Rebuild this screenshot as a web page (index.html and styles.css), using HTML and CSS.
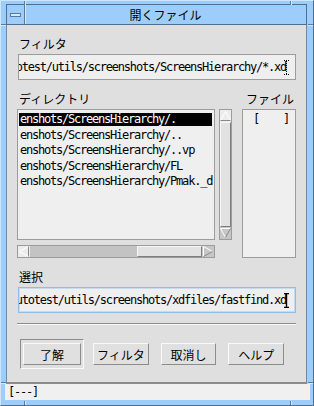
FILE: index.html
```html
<!DOCTYPE html>
<html lang="ja">
<head>
    <meta charset="UTF-8">
    <title>開くファイル</title>
    <link rel="stylesheet" href="styles.css">
</head>
<body>
    <div class="window">
        <!-- resize handle ticks on the frame -->
        <span class="tick tick-v" style="left:23px; top:0"></span>
        <span class="tick tick-v" style="left:289px; top:0"></span>
        <span class="tick tick-v" style="left:23px; bottom:0"></span>
        <span class="tick tick-v" style="left:289px; bottom:0"></span>
        <span class="tick tick-h" style="top:23px; left:0"></span>
        <span class="tick tick-h" style="top:23px; right:0"></span>
        <span class="tick tick-h" style="top:381px; left:0"></span>
        <span class="tick tick-h" style="top:381px; right:0"></span>

        <div class="titlebar">
            <div class="menu-btn"><span class="menu-bar"></span></div>
            <div class="title">開くファイル</div>
        </div>

        <div class="dialog">
            <div class="label">フィルタ</div>
            <div class="field">
                <span class="field-text">/home/user/autotest/utils/screenshots/ScreensHierarchy/*.xd</span>
                <svg class="ibeam" width="5" height="15" viewBox="0 0 5 15">
                    <path d="M0 0.5H5M0 14.5H5M2.5 1V14" stroke="#000" stroke-dasharray="1 1" fill="none"/>
                </svg>
            </div>

            <div class="lists-head">
                <div class="label dir-label">ディレクトリ</div>
                <div class="label file-label">ファイル</div>
            </div>

            <div class="lists">
                <div class="dir-col">
                    <div class="list dir-list">
                        <div class="item selected">enshots/ScreensHierarchy/.</div>
                        <div class="item">enshots/ScreensHierarchy/..</div>
                        <div class="item">enshots/ScreensHierarchy/..vp</div>
                        <div class="item">enshots/ScreensHierarchy/FL</div>
                        <div class="item">enshots/ScreensHierarchy/Pmak._d</div>
                    </div>
                    <div class="hscroll">
                        <div class="arrow arrow-light">
                            <svg width="12" height="11" viewBox="0 0 12 11">
                                <path d="M10.5 0.5L1.5 5.5L10.5 10.5" stroke="#fff" fill="none"/>
                                <path d="M10.5 0.5V10.5" stroke="#8a8a8a" fill="none"/>
                            </svg>
                        </div>
                        <div class="trough">
                            <div class="thumb thumb-h"></div>
                        </div>
                        <div class="arrow">
                            <svg width="12" height="11" viewBox="0 0 12 11">
                                <path d="M1.5 10.5V0.5L10.5 5.5" stroke="#fff" fill="none"/>
                                <path d="M10.5 5.5L1.5 10.5" stroke="#8a8a8a" fill="none"/>
                            </svg>
                        </div>
                    </div>
                </div>

                <div class="vscroll">
                    <div class="arrow arrow-light">
                        <svg width="11" height="12" viewBox="0 0 11 12">
                            <path d="M0.5 10.5L5.5 1.5L10.5 10.5" stroke="#fff" fill="none"/>
                            <path d="M0.5 10.5H10.5" stroke="#8a8a8a" fill="none"/>
                        </svg>
                    </div>
                    <div class="trough">
                        <div class="thumb thumb-v"></div>
                    </div>
                    <div class="arrow">
                        <svg width="11" height="12" viewBox="0 0 11 12">
                            <path d="M10.5 1.5H0.5L5.5 10.5" stroke="#fff" fill="none"/>
                            <path d="M5.5 10.5L10.5 1.5" stroke="#8a8a8a" fill="none"/>
                        </svg>
                    </div>
                </div>

                <div class="list file-list">
                    <div class="item file-item">[    ]</div>
                </div>
            </div>

            <div class="label sel-label">選択</div>
            <div class="field field-focus">
                <span class="field-text">/home/user/autotest/utils/screenshots/xdfiles/fastfind.xd</span>
                <svg class="ibeam" width="5" height="15" viewBox="0 0 5 15">
                    <path d="M0 0.5H5M0 14.5H5M2.5 1V14" stroke="#000" stroke-width="1.4" fill="none"/>
                </svg>
            </div>

            <div class="separator"></div>

            <div class="buttons">
                <div class="default-frame">
                    <button class="btn">了解</button>
                </div>
                <button class="btn">フィルタ</button>
                <button class="btn">取消し</button>
                <button class="btn">ヘルプ</button>
            </div>
        </div>

        <div class="status">[---]</div>
    </div>
</body>
</html>
```

FILE: styles.css
```css
body{
    margin: 0;
    font-family: "DejaVu Sans Mono", "Noto Sans CJK JP", monospace;
    font-size: 12px;
    color: #000;
}

.window{
    position: relative;
    width: 314px;
    height: 406px;
    box-sizing: border-box;
    background-color: #9dcdfb;
    border: 1px solid;
    border-color: #cde6ff #4f6f8f #4f6f8f #cde6ff;
    padding: 3px 6px 5px 5px;
    display: flex;
    flex-direction: column;
}

.tick{
    position: absolute;
    background-color: #5a7a9a;
}

.tick-v{
    width: 1px;
    height: 4px;
    border-right: 1px solid #d4eaff;
}

.tick-h{
    height: 1px;
    width: 5px;
    border-bottom: 1px solid #d4eaff;
}

.titlebar{
    height: 21px;
    box-sizing: border-box;
    border: 1px solid #4f6f8f;
    display: flex;
}

.menu-btn{
    width: 17px;
    border-right: 1px solid #5a7a9a;
    box-shadow: 1px 0 0 #d4eaff;
    display: flex;
    align-items: center;
    justify-content: center;
}

.menu-bar{
    width: 9px;
    height: 2px;
    background-color: #d4eaff;
    border: 1px solid #5a7a9a;
}

.title{
    flex: 1;
    text-align: center;
    font-family: "Noto Sans CJK JP", sans-serif;
    font-size: 12px;
    line-height: 19px;
}

.dialog{
    height: 359px;
    box-sizing: border-box;
    background-color: #dfdfdf;
    border-left: 1px solid #6f8aa5;
    border-right: 1px solid #6f8aa5;
    border-bottom: 2px solid #8c8c8c;
    padding: 10px 10px 13px 10px;
    display: flex;
    flex-direction: column;
}

.label{
    font-family: "Noto Sans CJK JP", sans-serif;
    font-size: 12px;
    line-height: 17px;
    padding-left: 2px;
}

.field{
    margin: 2px 0 0 1px;
    height: 26px;
    box-sizing: border-box;
    border: 1px solid #9c9c9c;
    background-color: #efefef;
    display: flex;
    justify-content: flex-end;
    align-items: center;
    overflow: hidden;
    padding-right: 6px;
}

.field-text{
    flex: none;
    white-space: pre;
    letter-spacing: -1.22px;
}

.ibeam{
    flex: none;
    margin-left: -2px;
}

.field-focus{
    border: 1px solid #8fbde4;
    box-shadow: inset 0 0 0 1px #c4dcf0;
}

.lists-head{
    margin-top: 11px;
    display: flex;
}

.lists-head .label{
    line-height: 16px;
}

.dir-label{
    width: 225px;
}

.lists{
    margin-top: 2px;
    display: flex;
    align-items: flex-start;
}

.dir-col{
    width: 198px;
}

.list{
    box-sizing: border-box;
    border: 1px solid #9c9c9c;
    background-color: #efefef;
}

.dir-list{
    height: 131px;
    padding: 3px 2px 0 1px;
}

.item{
    height: 13px;
    line-height: 13px;
    margin-bottom: 2.6px;
    white-space: pre;
    letter-spacing: -1.22px;
    padding-left: 1px;
}

.selected{
    background-color: #000;
    color: #fff;
}

.hscroll{
    margin-top: 5px;
    height: 13px;
    box-sizing: border-box;
    border: 1px solid #9c9c9c;
    display: flex;
}

.arrow{
    background-color: #c6c6c6;
    display: flex;
    align-items: center;
    justify-content: center;
}

.arrow-light{
    background-color: #ececec;
}

.hscroll .arrow{
    width: 12px;
}

.trough{
    flex: 1;
    background-color: #c3c3c3;
    display: flex;
}

.hscroll .trough{
    justify-content: flex-end;
}

.thumb{
    box-sizing: border-box;
    background-color: #e2e2e2;
    border: 1px solid;
    border-color: #f6f6f6 #7e7e7e #7e7e7e #f6f6f6;
}

.thumb-h{
    width: 65px;
}

.vscroll{
    margin-left: 4px;
    width: 13px;
    height: 131px;
    box-sizing: border-box;
    border: 1px solid #9c9c9c;
    display: flex;
    flex-direction: column;
}

.vscroll .arrow{
    height: 12px;
}

.vscroll .trough{
    flex-direction: column;
}

.thumb-v{
    flex: 1;
}

.file-list{
    margin-left: 10px;
    width: 54px;
    height: 149px;
    padding: 3px 0 0 10px;
}

.file-item{
    padding-left: 0;
}

.sel-label{
    margin-top: 11px;
    line-height: 16px;
}

.separator{
    margin-top: 10px;
    height: 1px;
    background-color: #8c8c8c;
    border-bottom: 1px solid #fafafa;
}

.buttons{
    margin-top: 14px;
    padding-left: 3px;
    display: flex;
    align-items: center;
}

.default-frame{
    border: 1px solid;
    border-color: #8c8c8c #fafafa #fafafa #8c8c8c;
    padding: 3px 2px;
    margin-right: 9px;
}

.btn{
    width: 58px;
    height: 22px;
    box-sizing: border-box;
    background-color: #e0e0e0;
    border: 1px solid;
    border-color: #fafafa #8c8c8c #8c8c8c #fafafa;
    font-family: "Noto Sans CJK JP", sans-serif;
    font-size: 12px;
    padding: 0;
    margin-right: 12px;
    color: #000;
}

.default-frame .btn{
    margin-right: 0;
}

.status{
    margin: 0 -3px 0 -1px;
    height: 16px;
    background-color: #f0f0f0;
    line-height: 16px;
    padding-left: 3px;
    letter-spacing: -1.22px;
}
```
